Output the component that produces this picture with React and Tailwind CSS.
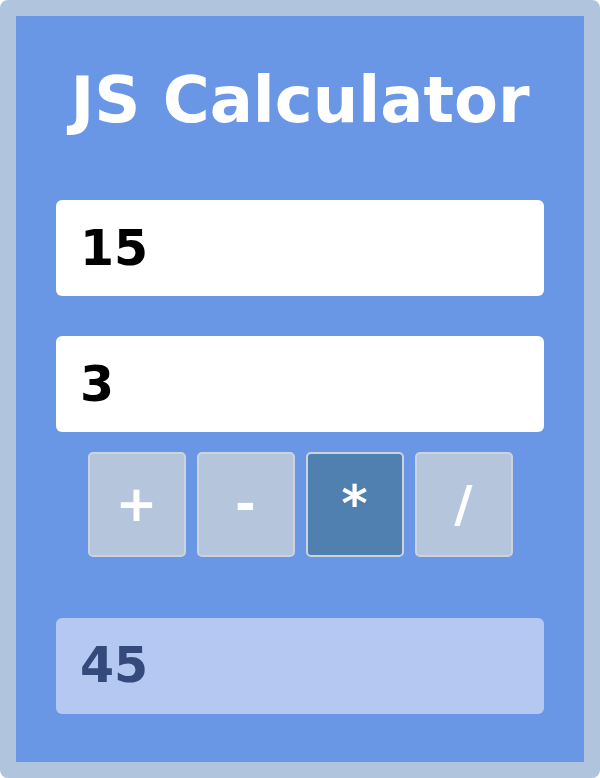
import React, { useState } from 'react';

const ops = ['+', '-', '*', '/'];

const App = () => {
  const [a, setA] = useState('15');
  const [b, setB] = useState('3');
  const [op, setOp] = useState('*');

  const x = parseFloat(a);
  const y = parseFloat(b);
  let result = '';
  if (!isNaN(x) && !isNaN(y)) {
    if (op === '+') result = x + y;
    if (op === '-') result = x - y;
    if (op === '*') result = x * y;
    if (op === '/') result = x / y;
  }

  return (
    <div
      className="w-[600px] h-[778px] border-[16px] border-[#b0c4de] rounded-[8px] bg-[#6a96e6] px-[40px] flex flex-col"
      style={{ fontFamily: '"DejaVu Sans", Verdana, sans-serif' }}
    >
      <h1 className="mt-[52px] text-[64px] leading-none font-bold text-white text-center whitespace-nowrap">
        JS Calculator
      </h1>
      <input
        type="text"
        value={a}
        onChange={(e) => setA(e.target.value)}
        className="mt-[68px] h-[96px] w-full bg-white rounded-[6px] pl-[24px] text-[49px] font-bold text-black outline-none"
      />
      <input
        type="text"
        value={b}
        onChange={(e) => setB(e.target.value)}
        className="mt-[40px] h-[96px] w-full bg-white rounded-[6px] pl-[24px] text-[49px] font-bold text-black outline-none"
      />
      <div className="mt-[20px] flex justify-center gap-[11px]">
        {ops.map((o) => (
          <button
            key={o}
            onClick={() => setOp(o)}
            className={
              'w-[98px] h-[105px] rounded-[5px] border-[2px] border-[#cdd3dc] text-white text-[50px] font-bold flex items-center justify-center ' +
              (op === o ? 'bg-[#5080b0]' : 'bg-[#b4c5dc]')
            }
          >
            {o}
          </button>
        ))}
      </div>
      <div className="mt-[61px] h-[96px] w-full bg-[#b4c8f2] rounded-[6px] pl-[24px] flex items-center text-[49px] font-bold text-[#344a7a]">
        {result}
      </div>
    </div>
  );
};

export default App;
